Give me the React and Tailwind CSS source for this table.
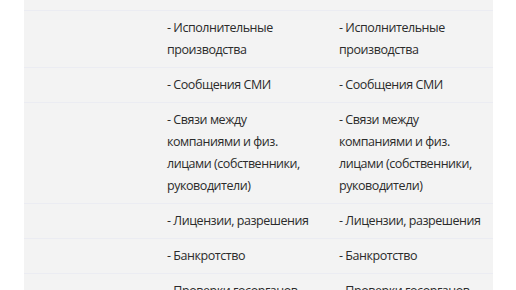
import React from "react";

const rows = [
  ["- Исполнительные", "производства"],
  ["- Сообщения СМИ"],
  ["- Связи между", "компаниями и физ.", "лицами (собственники,", "руководители)"],
  ["- Лицензии, разрешения"],
  ["- Банкротство"],
  ["- Проверки госорганов"],
];

function Cell({ lines }) {
  return (
    <div className="pl-[7px] py-[6px] whitespace-nowrap">
      {lines.map((l, i) => (
        <div key={i}>{l}</div>
      ))}
    </div>
  );
}

export default function App() {
  return (
    <div className="w-[516px] h-[290px] overflow-hidden bg-white" style={{ fontFamily: '"Open Sans", "Noto Sans", sans-serif' }}>
      <div className="ml-[24px] w-[469px] bg-[#f3f3f3]">
        <div className="h-[10px]" />
        {rows.map((r, i) => (
          <div key={i} className="grid grid-cols-[136px_172px_161px] border-t border-[#ebecf2] text-[12.5px] tracking-[-0.45px] leading-[22px] text-[#2b2b2b]">
            <div />
            <Cell lines={r} />
            <Cell lines={r} />
          </div>
        ))}
      </div>
    </div>
  );
}
